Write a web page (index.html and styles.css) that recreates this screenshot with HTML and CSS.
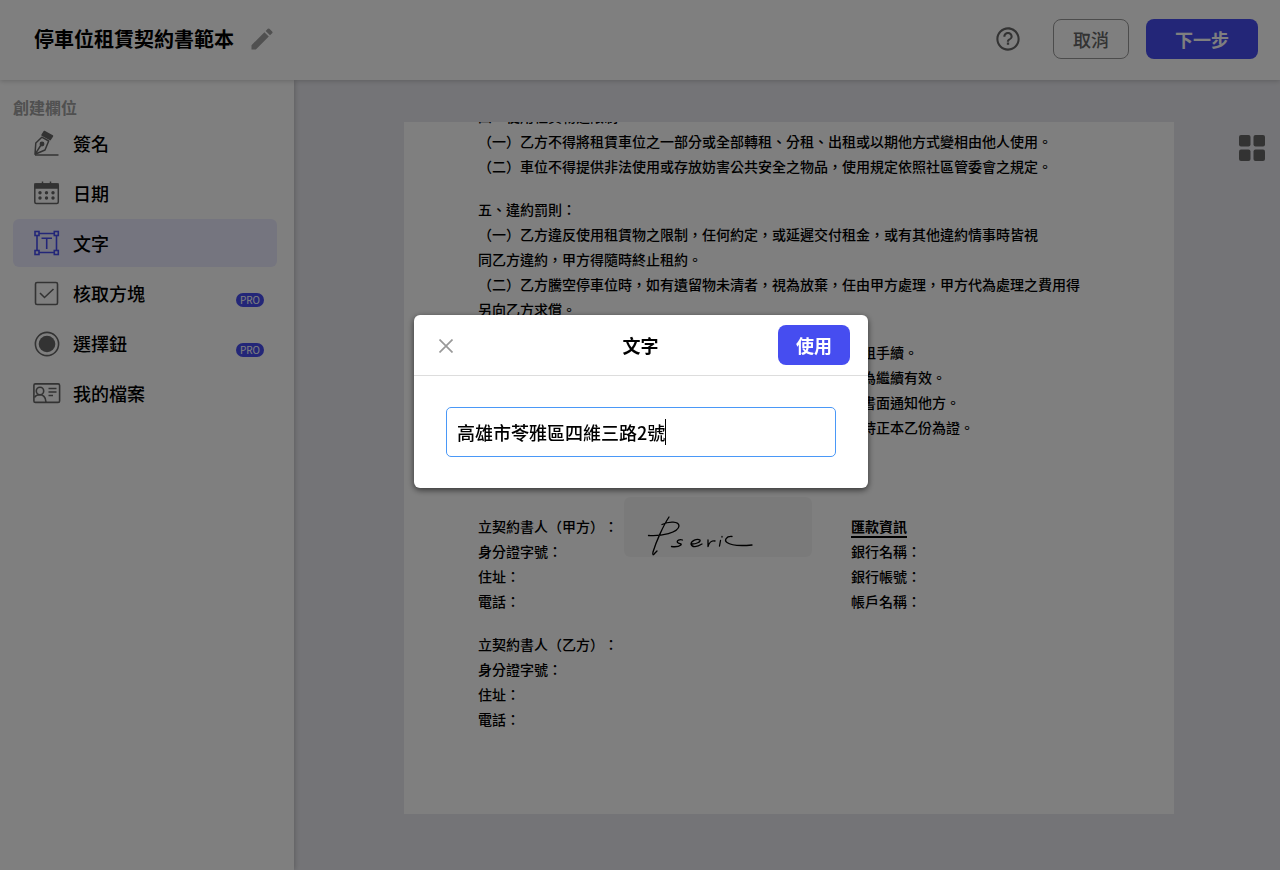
FILE: index.html
```html
<!DOCTYPE html>
<html lang="zh-Hant">
<head>
<meta charset="utf-8">
<meta name="viewport" content="width=device-width, initial-scale=1">
<title>停車位租賃契約書範本</title>
<link rel="stylesheet" href="styles.css">
</head>
<body>
<div class="app">
  <header class="topbar">
    <h1 class="doc-title">停車位租賃契約書範本</h1>
    <button class="icon-button edit" type="button" aria-label="編輯名稱">
      <svg width="28" height="28" viewBox="0 0 24 24" fill="#a0a0a0"><path d="M3 17.25V21h3.75L17.81 9.94l-3.75-3.75L3 17.25zM20.71 7.04a1 1 0 0 0 0-1.41l-2.34-2.34a1 1 0 0 0-1.41 0l-1.83 1.83 3.75 3.75 1.83-1.83z"/></svg>
    </button>
    <div class="actions">
      <button class="icon-button help" type="button" aria-label="說明">
        <svg width="28" height="28" viewBox="0 0 24 24" fill="#666"><path d="M11 17h2v-2h-2v2zm1-15C6.480 2 2 6.480 2 12s4.480 10 10 10 10-4.480 10-10S17.520 2 12 2zm0 18.200c-4.530 0-8.200-3.670-8.200-8.200S7.470 3.800 12 3.800s8.200 3.670 8.200 8.200-3.670 8.200-8.200 8.200zm0-14.200c-2.210 0-4 1.790-4 4h1.800c0-1.300 1-2.200 2.200-2.200s2.200 1 2.200 2.200c0 1.700-3.200 1.650-3.200 4.300h1.900c0-1.900 3.100-2.100 3.100-4.300 0-2.210-1.790-4-4-4z"/></svg>
      </button>
      <button class="button outline" type="button">取消</button>
      <button class="button primary next" type="button">下一步</button>
    </div>
  </header>

  <div class="workspace">
    <nav class="sidebar" aria-label="創建欄位">
      <h2 class="sidebar-title">創建欄位</h2>
      <ul class="fields">
        <li><button class="field" type="button">
          <svg class="field-icon" viewBox="0 0 28 28" fill="none" stroke="#666" stroke-width="1.500" stroke-linejoin="round"><path d="M11.300 2.500 19.500 7l-2.300 3.600L9 6.200z" fill="#666"/><path d="M8.800 8.200 2.800 14 2 25.300l10-4.300 3.700-9zM2 25.300 8 16"/><circle cx="9" cy="15" r="1.700" fill="#666"/><path d="M2 26h23.500"/></svg>
          <span>簽名</span></button></li>
        <li><button class="field" type="button">
          <svg class="field-icon" viewBox="0 0 28 28" fill="none" stroke="#666" stroke-width="1.500"><rect x="1.800" y="5" width="23.500" height="19.500" rx="1.500"/><path d="M2 5h23v4H2z" fill="#666"/><path d="M9.500 2.500V5M17.500 2.500V5"/><g fill="#666" stroke="none"><circle cx="7" cy="13.700" r="1.700"/><circle cx="13.500" cy="13.700" r="1.700"/><circle cx="20" cy="13.700" r="1.700"/><circle cx="7" cy="19" r="1.700"/><circle cx="13.500" cy="19" r="1.700"/><circle cx="20" cy="19" r="1.700"/></g></svg>
          <span>日期</span></button></li>
        <li><button class="field active" type="button" aria-current="true">
          <svg class="field-icon" viewBox="0 0 28 28" fill="none" stroke="#464df0" stroke-width="1.600"><path d="M6 4.500h15M6 23.500h15M4 6.500v15M23.500 6.500v15M8.500 9.200h10.500M13.700 9.200V20"/><rect x="2" y="2.500" width="4" height="4"/><rect x="21.300" y="2.500" width="4" height="4"/><rect x="2" y="21.500" width="4" height="4"/><rect x="21.300" y="21.500" width="4" height="4"/></svg>
          <span>文字</span></button></li>
        <li><button class="field" type="button">
          <svg class="field-icon" viewBox="0 0 28 28" fill="none" stroke="#666" stroke-width="1.600"><rect x="2.500" y="3.500" width="22" height="22" rx="1.500"/><path d="m7 14 4.500 4.500L20.500 10"/></svg>
          <span>核取方塊</span><span class="badge">PRO</span></button></li>
        <li><button class="field" type="button">
          <svg class="field-icon" viewBox="0 0 28 28" fill="none" stroke="#666" stroke-width="1.600"><circle cx="14" cy="15" r="11.600"/><circle cx="14" cy="15" r="8.300" fill="#666" stroke="none"/></svg>
          <span>選擇鈕</span><span class="badge">PRO</span></button></li>
        <li><button class="field" type="button">
          <svg class="field-icon" viewBox="0 0 28 28" fill="none" stroke="#666" stroke-width="1.600"><rect x=".9" y="4.900" width="25.700" height="18.500" rx="1.500"/><circle cx="7" cy="12" r="3.700"/><path d="M1.500 18.500c1-2 3-2.800 5.500-2.800s6 2 6 7.500M15.500 9.500H23.500M15.500 13H23.500M15.500 16.500h4.500"/></svg>
          <span>我的檔案</span></button></li>
      </ul>
    </nav>

    <main class="canvas">
      <article class="page">
        <section class="clause">
          <p>四、使用租賃物之限制</p>
          <p>（一）乙方不得將租賃車位之一部分或全部轉租、分租、出租或以期他方式變相由他人使用。</p>
          <p>（二）車位不得提供非法使用或存放妨害公共安全之物品，使用規定依照社區管委會之規定。</p>
        </section>
        <section class="clause">
          <p>五、違約罰則：</p>
          <p>（一）乙方違反使用租賃物之限制，任何約定，或延遲交付租金，或有其他違約情事時皆視</p>
          <p>同乙方違約，甲方得隨時終止租約。</p>
          <p>（二）乙方騰空停車位時，如有遺留物未清者，視為放棄，任由甲方處理，甲方代為處理之費用得</p>
          <p>另向乙方求償。</p>
        </section>
        <section class="clause line-ends">
          <p>租手續。</p>
          <p>為繼續有效。</p>
          <p>書面通知他方。</p>
          <p>持正本乙份為證。</p>
        </section>
        <div class="parties">
          <section class="party">
            <p>立契約書人（甲方）：</p>
            <p>身分證字號：</p>
            <p>住址：</p>
            <p>電話：</p>
          </section>
          <section class="remit">
            <p class="remit-title"><span>匯款資訊</span></p>
            <p>銀行名稱：</p>
            <p>銀行帳號：</p>
            <p>帳戶名稱：</p>
          </section>
          <div class="signature">
            <svg width="188" height="60" viewBox="0 0 188 60" fill="none" stroke="#000" stroke-width="1.300" stroke-linecap="round" stroke-linejoin="round" role="img" aria-label="簽名"><path d="M45 20C39 29 32 45 29 55q-1 5 2 1l2-2M24.500 38.500c13 1 30-3 30.500-9.500 0-5-10-5-17-1.500"/><path d="M58.500 43c-3-1-6 .5-5 2.500 2 1.500 4.500 1 3.500 2.500-2 1.500-6 2-9.500 1.500M68 47c4 0 9-2 8-4-3-2-9 1-9 4 1 4 6 3 11 0M84 43v6.500c1-4 4-6 7-5.500M96.500 43.500 95.500 49M98 39.500v.5M108 39.500c-6-.5-8 4-5 6 4 3 14 3.500 25 2.500"/></svg>
          </div>
        </div>
        <section class="clause party">
          <p>立契約書人（乙方）：</p>
          <p>身分證字號：</p>
          <p>住址：</p>
          <p>電話：</p>
        </section>
      </article>
      <button class="icon-button thumbs" type="button" aria-label="頁面縮圖">
        <svg width="26" height="26" viewBox="0 0 26 26" fill="#666"><rect width="11.500" height="11.500" rx="2"/><rect x="14.500" width="11.500" height="11.500" rx="2"/><rect y="14.500" width="11.500" height="11.500" rx="2"/><rect x="14.500" y="14.500" width="11.500" height="11.500" rx="2"/></svg>
      </button>
    </main>
  </div>
</div>

<div class="overlay">
  <form class="dialog" role="dialog" aria-modal="true" aria-labelledby="dialog-title">
    <div class="dialog-head">
      <button class="icon-button close" type="button" aria-label="關閉">
        <svg width="14" height="14" viewBox="0 0 14 14" stroke="#999" stroke-width="1.700"><path d="m.5.5 13 13M13.500.5l-13 13"/></svg>
      </button>
      <h2 class="dialog-title" id="dialog-title">文字</h2>
      <button class="button primary" type="button">使用</button>
    </div>
    <div class="dialog-body">
      <div class="input-wrap">
        <input class="text-input" type="text" aria-labelledby="dialog-title" value="高雄市苓雅區四維三路2號">
        <span class="caret"></span>
      </div>
    </div>
  </form>
</div>
</body>
</html>
```
FILE: styles.css
```css
* { box-sizing: border-box; }
body {
  margin: 0;
  color: #000;
  font-family: "Noto Sans CJK TC", "Noto Sans", sans-serif;
  font-size: 18px;
  text-spacing-trim: space-all;
}
h1, h2, p, ul { margin: 0; padding: 0; }
ul { list-style: none; }
button, input { font: inherit; color: inherit; }
.app { display: flex; flex-direction: column; min-height: 100vh; }

.topbar {
  position: relative;
  z-index: 2;
  display: flex;
  align-items: center;
  height: 80px;
  padding: 0 22px 2px 34px;
  background: #fff;
  box-shadow: 0 1px 5px rgba(0, 0, 0, .2);
}
.doc-title { font-size: 20px; line-height: 30px; font-weight: 700; }
.icon-button { display: flex; padding: 0; border: 0; background: none; cursor: pointer; }
.edit { margin-left: 14px; }
.actions { display: flex; align-items: center; gap: 17px; margin-left: auto; }
.help { margin-right: 14px; }
.button {
  height: 40px;
  padding: 0 17px;
  border: 1px solid transparent;
  border-radius: 8px;
  line-height: 24px;
  font-weight: 500;
  cursor: pointer;
}
.outline { padding: 0 19px; border-color: #999; background: #fff; color: #666; }
.primary { background: #464df0; color: #fff; font-weight: 700; }
.next { padding: 0 28px; }

.workspace { display: flex; flex: 1; }
.sidebar {
  position: relative;
  z-index: 1;
  flex: 0 0 294px;
  padding: 15px 17px 16px 13px;
  background: #fff;
  box-shadow: 1px 0 5px rgba(0, 0, 0, .2);
}
.sidebar-title { font-size: 16px; line-height: 24px; font-weight: 700; color: #a0a0a0; }
.fields { display: flex; flex-direction: column; gap: 2px; }
.field {
  display: flex;
  align-items: center;
  width: 100%;
  height: 48px;
  padding: 0 13px 0 20px;
  border: 0;
  border-radius: 6px;
  background: none;
  font-weight: 500;
  text-align: left;
  cursor: pointer;
}
.field.active { background: #ebebff; }
.field-icon { width: 28px; height: 28px; margin-right: 12px; }
.badge {
  align-self: flex-end;
  margin: 0 0 10px auto;
  padding: 0 4px;
  border-radius: 7px;
  background: #464df0;
  color: #fff;
  font-size: 10px;
  line-height: 14px;
  font-weight: 400;
}

.canvas {
  display: flex;
  flex: 1;
  gap: 65px;
  min-width: 0;
  padding: 42px 15px 56px 110px;
  background: #e9e9ee;
}
.page {
  flex: 1;
  min-width: 0;
  padding: 0 74px;
  overflow: hidden;
  background: #fff;
  font-size: 14px;
  line-height: 25px;
  font-weight: 500;
}
.clause { margin-top: 18px; }
.clause:first-child { margin-top: -18px; }
.line-ends { margin-left: 384px; }
.parties { position: relative; display: grid; grid-template-columns: 373px 1fr; margin-top: 74px; }
.remit-title { font-weight: 700; }
.remit-title span { border-bottom: 2px solid #000; }
.signature {
  position: absolute;
  left: 146px;
  top: -17px;
  height: 60px;
  border-radius: 6px;
  background: rgba(0, 0, 0, .04);
}
.thumbs { align-self: flex-start; margin-top: 13px; }

.overlay {
  position: fixed;
  inset: 0;
  z-index: 10;
  display: flex;
  align-items: center;
  justify-content: center;
  padding: 0 0 68px 2px;
  background: rgba(0, 0, 0, .5);
}
.dialog {
  width: 454px;
  max-width: 100%;
  border-radius: 6px;
  background: #fff;
  box-shadow: 0 2px 6px rgba(0, 0, 0, .6);
}
.dialog-head {
  display: grid;
  grid-template-columns: 1fr auto 1fr;
  align-items: center;
  height: 61px;
  padding: 0 18px 0 25px;
  border-bottom: 1px solid #ddd;
}
.dialog-title { padding-right: 8px; font-size: 18px; line-height: 24px; font-weight: 700; }
.dialog-head .primary { justify-self: end; }
.close { justify-self: start; margin-top: 3px; }
.dialog-body { padding: 31px 32px; }
.input-wrap { position: relative; }
.text-input {
  display: block;
  width: 100%;
  height: 50px;
  padding: 0 10px;
  border: 1px solid #4a98f7;
  border-radius: 5px;
  background: #fff;
  outline: none;
  font-weight: 500;
}
.caret {
  position: absolute;
  left: 219px;
  top: 12px;
  width: 1px;
  height: 26px;
  background: #000;
}
```
